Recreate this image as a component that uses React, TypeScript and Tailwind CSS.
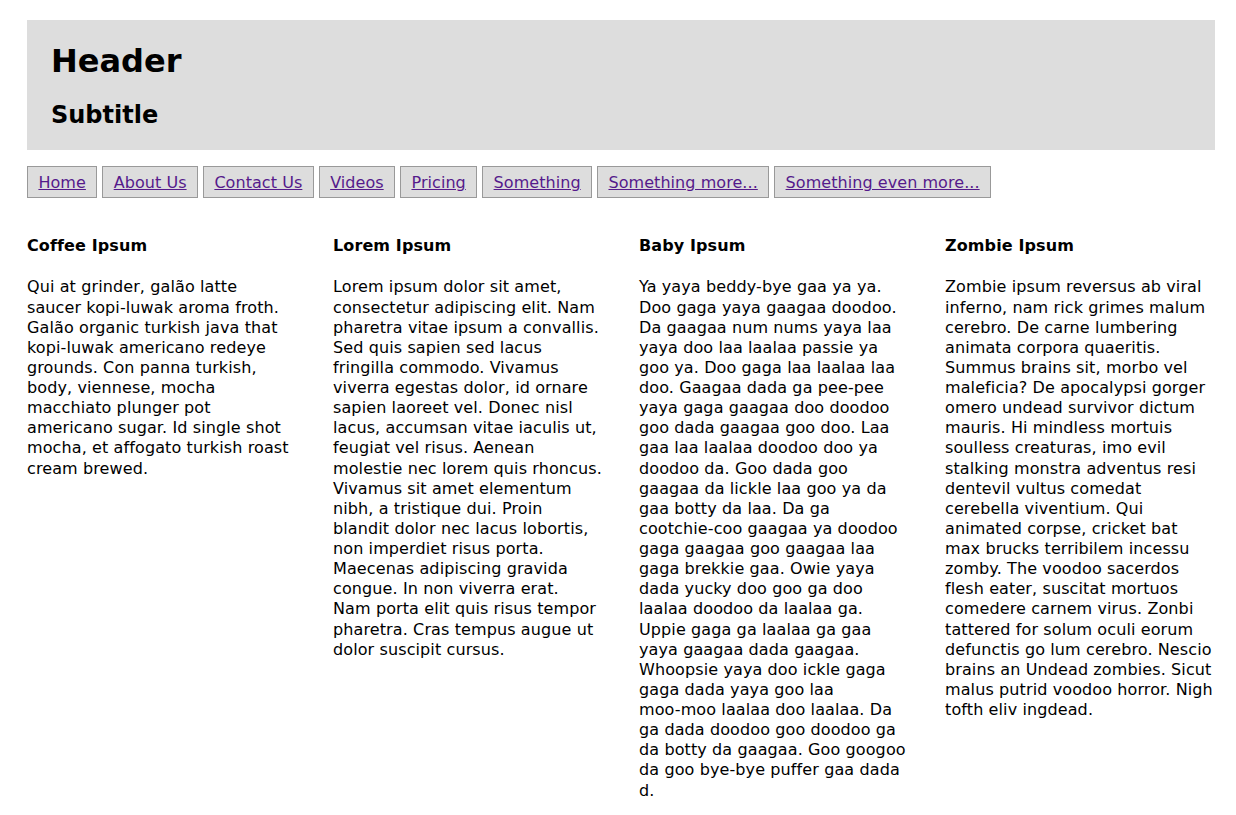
const NAV_LINKS = [
  'Home',
  'About Us',
  'Contact Us',
  'Videos',
  'Pricing',
  'Something',
  'Something more...',
  'Something even more...',
];

// Line breaks follow the original layout so the columns wrap the same way.
const COLUMNS = [
  {
    title: 'Coffee Ipsum',
    body: `Qui at grinder, galão latte
saucer kopi-luwak aroma froth.
Galão organic turkish java that
kopi-luwak americano redeye
grounds. Con panna turkish,
body, viennese, mocha
macchiato plunger pot
americano sugar. Id single shot
mocha, et affogato turkish roast
cream brewed.`,
  },
  {
    title: 'Lorem Ipsum',
    body: `Lorem ipsum dolor sit amet,
consectetur adipiscing elit. Nam
pharetra vitae ipsum a convallis.
Sed quis sapien sed lacus
fringilla commodo. Vivamus
viverra egestas dolor, id ornare
sapien laoreet vel. Donec nisl
lacus, accumsan vitae iaculis ut,
feugiat vel risus. Aenean
molestie nec lorem quis rhoncus.
Vivamus sit amet elementum
nibh, a tristique dui. Proin
blandit dolor nec lacus lobortis,
non imperdiet risus porta.
Maecenas adipiscing gravida
congue. In non viverra erat.
Nam porta elit quis risus tempor
pharetra. Cras tempus augue ut
dolor suscipit cursus.`,
  },
  {
    title: 'Baby Ipsum',
    body: `Ya yaya beddy-bye gaa ya ya.
Doo gaga yaya gaagaa doodoo.
Da gaagaa num nums yaya laa
yaya doo laa laalaa passie ya
goo ya. Doo gaga laa laalaa laa
doo. Gaagaa dada ga pee-pee
yaya gaga gaagaa doo doodoo
goo dada gaagaa goo doo. Laa
gaa laa laalaa doodoo doo ya
doodoo da. Goo dada goo
gaagaa da lickle laa goo ya da
gaa botty da laa. Da ga
cootchie-coo gaagaa ya doodoo
gaga gaagaa goo gaagaa laa
gaga brekkie gaa. Owie yaya
dada yucky doo goo ga doo
laalaa doodoo da laalaa ga.
Uppie gaga ga laalaa ga gaa
yaya gaagaa dada gaagaa.
Whoopsie yaya doo ickle gaga
gaga dada yaya goo laa
moo-moo laalaa doo laalaa. Da
ga dada doodoo goo doodoo ga
da botty da gaagaa. Goo googoo
da goo bye-bye puffer gaa dada
d.`,
  },
  {
    title: 'Zombie Ipsum',
    body: `Zombie ipsum reversus ab viral
inferno, nam rick grimes malum
cerebro. De carne lumbering
animata corpora quaeritis.
Summus brains sit, morbo vel
maleficia? De apocalypsi gorger
omero undead survivor dictum
mauris. Hi mindless mortuis
soulless creaturas, imo evil
stalking monstra adventus resi
dentevil vultus comedat
cerebella viventium. Qui
animated corpse, cricket bat
max brucks terribilem incessu
zomby. The voodoo sacerdos
flesh eater, suscitat mortuos
comedere carnem virus. Zonbi
tattered for solum oculi eorum
defunctis go lum cerebro. Nescio
brains an Undead zombies. Sicut
malus putrid voodoo horror. Nigh
tofth eliv ingdead.`,
  },
];

export default function App() {
  return (
    <div className="bg-white text-black font-['DejaVu_Sans',sans-serif] text-[16px] leading-[20.12px] tracking-[0.11px]">
      <div className="ml-[27px] mr-[21px] pt-[20px]">
        {/* page header */}
        <header className="h-[130px] bg-[#dddddd] pl-[24px] pt-[22px]">
          <h1 className="text-[32px] font-bold leading-[normal] tracking-normal">Header</h1>
          <h2 className="mt-[21px] text-[24px] font-bold leading-[normal] tracking-normal">Subtitle</h2>
        </header>

        <nav className="mt-[16px] flex gap-[5px]">
          {NAV_LINKS.map((label) => (
            <a
              key={label}
              href="#"
              className="flex h-[32px] items-center border border-[#999999] bg-[#dddddd] px-[10.4px] pt-[2px] tracking-[0.06px] text-[#551a8b] underline"
            >
              {label}
            </a>
          ))}
        </nav>

        <main className="mt-[38px] grid grid-cols-4 gap-x-[36px]">
          {COLUMNS.map((col) => (
            <section key={col.title}>
              <h4 className="font-bold">{col.title}</h4>
              <p className="mt-[21.3px] whitespace-pre-line">{col.body}</p>
            </section>
          ))}
        </main>
      </div>
    </div>
  );
}
